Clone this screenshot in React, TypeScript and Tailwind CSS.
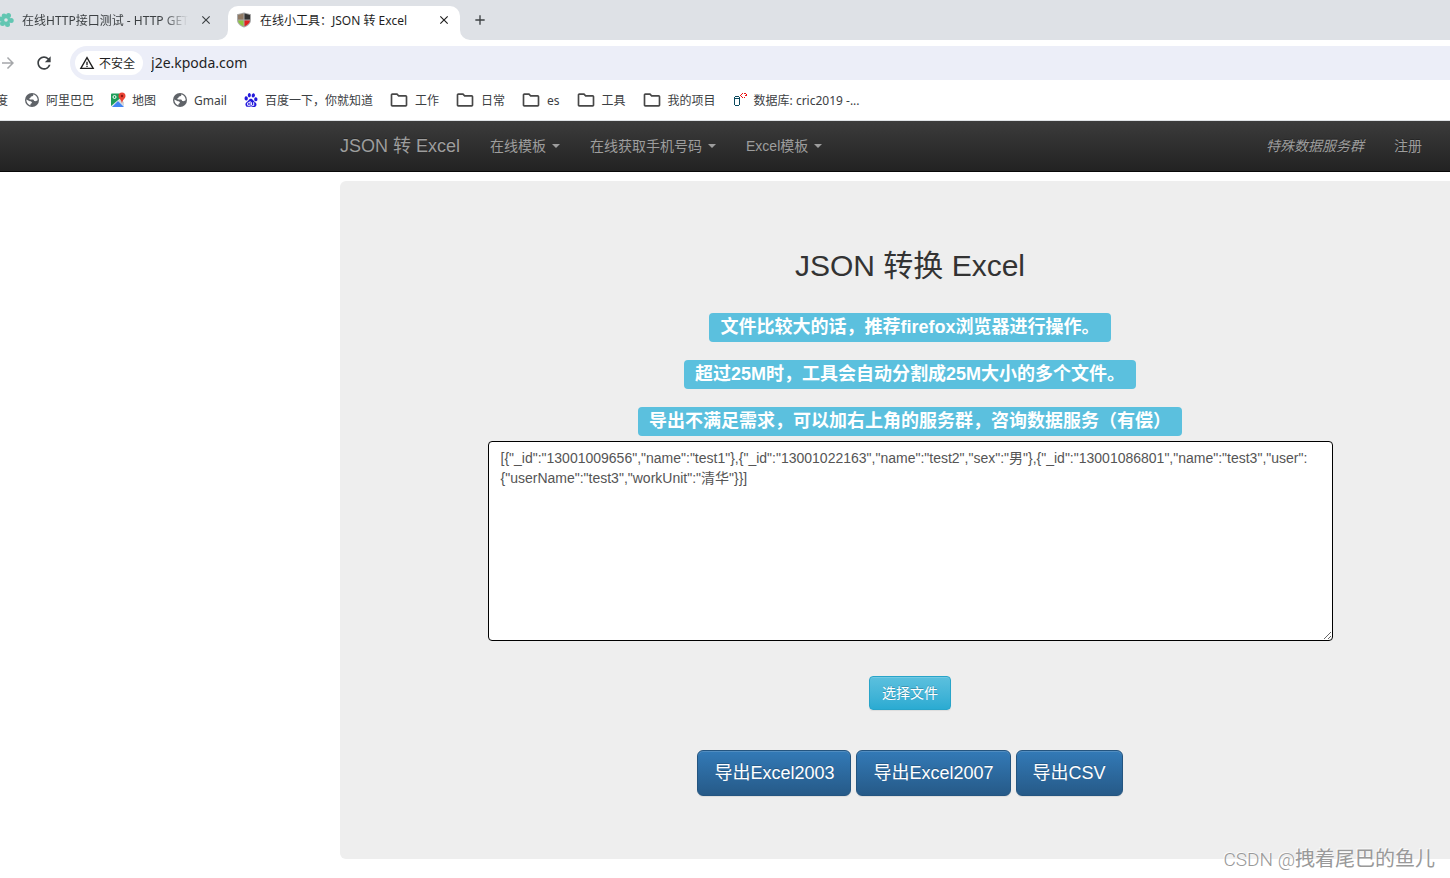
import React, { useState } from 'react';
import { MdAdd, MdArrowForward, MdClose, MdOutlineFolder, MdRefresh, MdWarningAmber } from 'react-icons/md';
import { SiBaidu } from 'react-icons/si';

const SAMPLE_JSON =
  '[{"_id":"13001009656","name":"test1"},{"_id":"13001022163","name":"test2","sex":"男"},{"_id":"13001086801","name":"test3","user":{"userName":"test3","workUnit":"清华"}}]';

const NOTICES = [
  '文件比较大的话，推荐firefox浏览器进行操作。',
  '超过25M时，工具会自动分割成25M大小的多个文件。',
  '导出不满足需求，可以加右上角的服务群，咨询数据服务（有偿）',
];

const MENUS = ['在线模板', '在线获取手机号码', 'Excel模板'];

const EXPORTS = ['导出Excel2003', '导出Excel2007', '导出CSV'];

const FlowerIcon = () => (
  <svg viewBox="0 0 16 16" className="w-4 h-4 shrink-0" fill="#62c6b2">
    <circle cx="10.500" cy="3.500" r="2.500" />
    <circle cx="13.200" cy="8.500" r="2.500" />
    <circle cx="9.500" cy="12.500" r="2.500" />
    <circle cx="4.500" cy="11.500" r="2.500" />
    <circle cx="3" cy="7" r="2.500" />
    <circle cx="6" cy="3.800" r="2.300" />
    <circle cx="8" cy="8" r="3.500" stroke="#62c6b2" strokeWidth="2" />
    <circle cx="8" cy="8" r="1.800" fill="#dee1e6" />
  </svg>
);

const ShieldIcon = () => (
  <svg viewBox="0 0 16 16" className="w-4 h-4 shrink-0">
    <path d="M8 .5 15 2.300V8C15 11.600 12 14.100 8 15.600 4 14.100 1 11.600 1 8V2.300Z" fill="#a9a9a9" />
    <path d="M7.500 1.600V7.500H2V3Z" fill="#917a64" />
    <path d="M8.500 1.600V7.500H14V3Z" fill="#333" />
    <path d="M2 8.500H7.500V14.300C4.500 13 2.200 11 2 8.500Z" fill="#8cc63f" />
    <path d="M14 8.500H8.500V14.300C11.500 13 13.800 11 14 8.500Z" fill="#e02020" />
  </svg>
);

const GlobeIcon = () => (
  <svg viewBox="0 0 16 16" className="w-4 h-4">
    <circle cx="8" cy="8" r="7" fill="#5f6368" />
    <path d="M9.200 2.300C9.800 3.600 8.800 4.300 7.300 4.500 6.300 4.800 6.800 6 5.700 6.300 4.900 6.600 5.200 7.400 6.200 7.400H8.900C10 7.400 9.800 9 10.700 9.100 12 9.300 13.200 8.600 13.700 8 13.600 5.300 11.700 2.900 9.200 2.300Z" fill="#fff" />
    <path d="M2.300 7.600 5.800 9.200C7.200 9.200 8 9.800 7.900 10.700 7.700 11.500 6.700 11.400 6.500 12.300L6.300 13.500C4 12.800 2.300 10.500 2.300 7.600Z" fill="#fff" />
  </svg>
);

const MapIcon = () => (
  <svg viewBox="0 0 16 16" className="w-4 h-4">
    <path d="M1 2H11L14 13 13 15H2L1 14Z" fill="#e8eaed" />
    <path d="M1 2.500C1 2 1.500 1.500 2 1.500H9.500L10.500 6 1 14Z" fill="#1e9e5a" />
    <path d="M2 15 8 9 14 15Z" fill="#4285f4" />
    <path d="M10 7.500 14 10V14L8.500 9Z" fill="#d5d8dc" />
    <circle cx="4.500" cy="5" r="1.500" fill="none" stroke="#fff" />
    <path d="M12 .5A3.500 3.500 0 0 1 15.500 4C15.500 6.500 12.500 7.500 12 11.500 11.500 7.500 8.500 6.500 8.500 4A3.500 3.500 0 0 1 12 .5Z" fill="#ea4335" />
    <circle cx="12" cy="4" r="1.200" fill="#8c1a11" />
  </svg>
);

const DatabaseIcon = () => (
  <svg viewBox="0 0 16 16" className="w-4 h-4" fill="none" shapeRendering="crispEdges">
    <path d="M3 4.500H7M3 13.500H7M2.500 5V13M7.500 5V13M3 6.500H7" stroke="#0b4a5e" />
    <path d="M10 1.500H11M9 2.500H10M8 3.500H9M9 4.500H10M10 5.500H11M12 1.500H14M14 2.500H15M13 3.500H15M12 5.500H13" stroke="#e11" />
  </svg>
);

const FolderIcon = () => <MdOutlineFolder className="w-5 h-5 text-[#474747]" />;

const BaiduIcon = () => <SiBaidu className="w-[14px] h-[14px] mx-px text-[#2319dc]" />;

const BOOKMARKS = [
  { label: '阿里巴巴', icon: <GlobeIcon /> },
  { label: '地图', icon: <MapIcon /> },
  { label: 'Gmail', icon: <GlobeIcon /> },
  { label: '百度一下，你就知道', icon: <BaiduIcon /> },
  { label: '工作', icon: <FolderIcon /> },
  { label: '日常', icon: <FolderIcon /> },
  { label: 'es', icon: <FolderIcon /> },
  { label: '工具', icon: <FolderIcon /> },
  { label: '我的项目', icon: <FolderIcon /> },
  { label: '数据库: cric2019 -...', icon: <DatabaseIcon /> },
];

const BrowserChrome: React.FC = () => {
  const [url, setUrl] = useState('j2e.kpoda.com');

  return (
    <div className="font-['Noto_Sans','Noto_Sans_CJK_SC',sans-serif] text-xs text-[#3c4043]">
      {/* Tab strip */}
      <div className="flex h-10 bg-[#dee1e6] overflow-hidden">
        <div className="flex items-center w-[218px] shrink-0 pr-1">
          <div className="-ml-[2px]"><FlowerIcon /></div>
          <span className="ml-2 pt-px w-[166px] overflow-hidden whitespace-nowrap [mask-image:linear-gradient(to_right,black_85%,transparent)]">
            在线HTTP接口测试 - HTTP GET
          </span>
          <button aria-label="关闭" className="ml-[11px]"><MdClose className="w-[14px] h-[14px] stroke-current" /></button>
        </div>
        <svg viewBox="0 0 10 10" className="w-[10px] h-[10px] self-end shrink-0" fill="#fff">
          <path d="M10 0A10 10 0 0 1 0 10H10Z" />
        </svg>
        <div className="flex items-center self-end w-[232px] h-[34px] shrink-0 rounded-t-[10px] bg-white pl-2 pr-[9px] pb-[6px] text-[#1f1f1f]">
          <ShieldIcon />
          <span className="ml-2 pt-px flex-1 whitespace-nowrap">在线小工具：JSON 转 Excel</span>
          <button aria-label="关闭"><MdClose className="w-[14px] h-[14px] stroke-current" /></button>
        </div>
        <svg viewBox="0 0 10 10" className="w-[10px] h-[10px] self-end shrink-0" fill="#fff">
          <path d="M0 0A10 10 0 0 0 10 10H0Z" />
        </svg>
        <button aria-label="新标签页" className="ml-[2px]"><MdAdd className="w-4 h-4" /></button>
      </div>

      {/* Toolbar */}
      <div className="flex items-center h-[46px] bg-white">
        <button aria-label="前进" className="-ml-px text-[#a5a7aa]"><MdArrowForward className="w-[18px] h-[18px]" /></button>
        <button aria-label="刷新" className="ml-[17px]"><MdRefresh className="w-5 h-5" /></button>
        <div className="flex flex-1 items-center h-[34px] ml-4 pl-[5px] rounded-l-full bg-[#eceef8]">
          <button className="flex items-center gap-1 h-6 px-1 pr-2 rounded-full bg-white text-[#1f1f1f]">
            <MdWarningAmber className="w-4 h-4" />
            <span className="pt-px">不安全</span>
          </button>
          <input
            aria-label="地址"
            value={url}
            onChange={(e) => setUrl(e.target.value)}
            className="flex-1 ml-2 bg-transparent text-sm text-[#1f1f1f] outline-none"
          />
        </div>
      </div>

      {/* Bookmarks */}
      <div className="flex items-center gap-4 h-[35px] pb-[6px] bg-white border-b border-[#dfe3e6] whitespace-nowrap overflow-hidden">
        <a href="#" className="-ml-1 pt-px">度</a>
        {BOOKMARKS.map((b) => (
          <a key={b.label} href="#" className="flex items-center gap-[6px]">
            {b.icon}
            <span className="pt-px">{b.label}</span>
          </a>
        ))}
      </div>
    </div>
  );
};

const NavBar: React.FC = () => (
  <nav className="flex items-center justify-between h-[51px] pl-[340px] pr-7 border-b border-[#080808] bg-linear-to-b from-[#3c3c3c] to-[#222] text-sm text-[#9d9d9d] [text-shadow:0_-1px_0_rgba(0,0,0,0.25)] whitespace-nowrap">
    <div className="flex items-center gap-[30px]">
      <a href="#" className="text-lg leading-5">JSON 转 Excel</a>
      {MENUS.map((m) => (
        <button key={m} className="flex items-center gap-[6px] leading-5">
          {m}
          <span className="border-x-4 border-t-4 border-x-transparent border-t-[#9d9d9d]" />
        </button>
      ))}
    </div>
    <div className="flex items-center gap-[30px] leading-5">
      <a href="#" className="italic">特殊数据服务群</a>
      <a href="#">注册</a>
    </div>
  </nav>
);

const App: React.FC = () => {
  const [json, setJson] = useState(SAMPLE_JSON);

  return (
    <div className="relative min-h-screen bg-white overflow-hidden font-['Liberation_Sans','Noto_Sans_CJK_SC',sans-serif]">
      <BrowserChrome />
      <NavBar />

      <main className="pl-[340px] pt-[9px]">
        <div className="flex flex-col items-center rounded-l-md bg-[#eee] pl-[60px] pr-[30px] pt-[68px] pb-[63px]">
          <h2 className="text-[30px] leading-[34px] text-[#333]">JSON 转换 Excel</h2>

          <div className="flex flex-col items-center gap-[18px] mt-[30px]">
            {NOTICES.map((n) => (
              <h3 key={n} className="h-[29px] px-[11px] rounded bg-[#5bc0de] text-lg leading-7 font-bold text-white">
                {n}
              </h3>
            ))}
          </div>

          <textarea
            aria-label="JSON"
            value={json}
            onChange={(e) => setJson(e.target.value)}
            spellCheck={false}
            className="w-full max-w-[845px] h-[200px] mt-[5px] px-3 py-[6px] rounded border border-black bg-white text-sm leading-5 text-[#555] outline-none"
          />

          <button className="h-[34px] mt-[35px] px-3 rounded border border-[#28a4c9] bg-linear-to-b from-[#5bc0de] to-[#2aabd2] text-sm text-white [text-shadow:0_-1px_0_rgba(0,0,0,0.2)] shadow-[inset_0_1px_0_rgba(255,255,255,0.15),0_1px_1px_rgba(0,0,0,0.075)]">
            选择文件
          </button>

          <div className="flex gap-[5px] mt-10">
            {EXPORTS.map((label) => (
              <button
                key={label}
                className="h-[46px] px-4 rounded-md border border-[#245580] bg-linear-to-b from-[#337ab7] to-[#265a88] text-lg text-white [text-shadow:0_-1px_0_rgba(0,0,0,0.2)] shadow-[inset_0_1px_0_rgba(255,255,255,0.15),0_1px_1px_rgba(0,0,0,0.075)]"
              >
                {label}
              </button>
            ))}
          </div>
        </div>
      </main>

      {/* Watermark */}
      <div className="absolute right-[15px] bottom-1 text-xl leading-7 text-[#999] [text-shadow:-1px_-1px_0_rgba(255,255,255,0.8)] pointer-events-none">
        <span className="font-[Roboto] font-light text-[19px]">CSDN @</span>拽着尾巴的鱼儿
      </div>
    </div>
  );
};

export default App;
